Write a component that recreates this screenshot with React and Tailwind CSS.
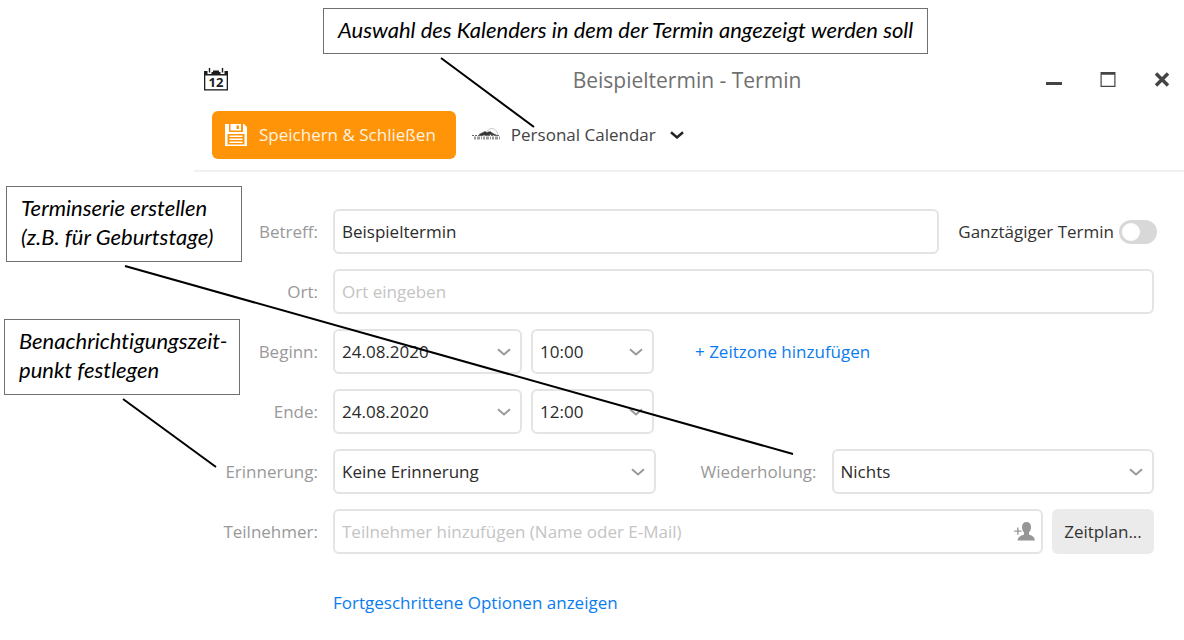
import { useState } from 'react';

const lines = [
  { x1: 441, y1: 58, x2: 534, y2: 127 },
  { x1: 125, y1: 266, x2: 793, y2: 454 },
  { x1: 123, y1: 399, x2: 216, y2: 467 },
];

function Chevron({ className }) {
  return (
    <svg
      className={`pointer-events-none absolute top-1/2 -translate-y-1/2 ${className}`}
      width="14"
      height="8"
      viewBox="0 0 14 8"
      fill="none"
      stroke="currentColor"
      aria-hidden="true"
    >
      <path d="M1 1.2 7 6.4l6-5.2" />
    </svg>
  );
}

function CalendarIcon() {
  return (
    <svg width="24" height="24" viewBox="0 0 24 24" aria-hidden="true">
      <path d="M0 3h3.500v3h4V4h9v2h4V3H24v19.500H0z" fill="#1c1c1c" />
      <path d="M4.800 0h1.400v4.500H4.800zM17.800 0h1.400v4.500h-1.400zM9 2.500h6V4H9z" fill="#1c1c1c" />
      <path d="M1.300 7.500h21.400v13.700H1.300z" fill="#fff" />
      <text x="12" y="19" textAnchor="middle" className="font-['Open_Sans',sans-serif] text-[13px] font-bold" fill="#1c1c1c">
        12
      </text>
    </svg>
  );
}

function SaveIcon() {
  return (
    <svg width="22" height="22" viewBox="0 0 22 22" fill="#fff" aria-hidden="true">
      <path fillRule="evenodd" d="M0 0h4v8h14V0h1l3 3v19H0zM2.500 10v10.500h17V10z" />
      <path fillRule="evenodd" d="M5.500 0H16v6.500H5.500zM11.500 1.500V5h2.500V1.500z" />
      <path d="M4.500 11.500h13V13h-13zM4.500 14.500h13V16h-13zM4.500 17.500h13V19h-13z" />
    </svg>
  );
}

function MountainIcon() {
  return (
    <svg width="29" height="16" viewBox="0 0 29 16" fill="none" aria-hidden="true">
      <path d="M15 4.500c2-4 9-5 11 3.500" stroke="#c9c9c9" />
      <path d="M7 7.500 10 6l3-1.500 2 1 3-1 3 2 4 2-4-.5-3-.5-3 1-3-.5-3 1z" fill="#333" stroke="#444" strokeWidth=".6" />
      <path d="M0 8.500h9M13 8.500h14" stroke="#666" strokeDasharray="2 1" />
      <path d="M2 11h26" stroke="#999" strokeWidth="3" strokeDasharray="2 1 3 1 1 1" />
    </svg>
  );
}

function AddPersonIcon() {
  return (
    <svg width="21" height="19" viewBox="0 0 21 19" fill="#969696" aria-hidden="true">
      <path d="M12.500 0c3 0 4.500 2 4.500 5 0 2.500-.8 4.300-2 5.600v1.900c2.500 1 5.500 2 6 6H3.500c.5-4 4-5 6.500-6v-1.900C8.800 9.300 8 7.500 8 5c0-3 1.500-5 4.500-5z" />
      <path d="M3.200 5.500h1.300v3h3v1.300h-3v3H3.200v-3h-3V8.500h3z" />
    </svg>
  );
}

function Label({ htmlFor, children }) {
  return (
    <label htmlFor={htmlFor} className="w-[124px] shrink-0 text-right text-[#999]">
      {children}
    </label>
  );
}

function Select({ id, label, value, className }) {
  return (
    <div className={`relative ${className}`}>
      <select
        id={id}
        aria-label={label}
        className="h-[45px] w-full appearance-none rounded-md border-2 border-[#e4e4e4] bg-white px-[7px] text-[#2b2b2b]"
      >
        <option>{value}</option>
      </select>
      <Chevron className="right-[11px] stroke-2 text-[#999]" />
    </div>
  );
}

function Callout({ className, children }) {
  return (
    <p
      className={`absolute border border-[#707070] bg-white px-3.5 py-1.5 font-[Lato,sans-serif] text-[22px] leading-[29px] whitespace-nowrap text-black italic [font-variant-ligatures:none] ${className}`}
    >
      {children}
    </p>
  );
}

function App() {
  const [subject, setSubject] = useState('Beispieltermin');
  const [location, setLocation] = useState('');
  const [attendees, setAttendees] = useState('');
  const [allDay, setAllDay] = useState(false);

  const inputClass =
    'h-[45px] w-full min-w-0 flex-1 rounded-md border-2 border-[#e4e4e4] bg-white px-[7px] text-[#2b2b2b] placeholder:text-[#c4c4c4]';

  return (
    <div className="relative min-h-screen bg-white pt-14 pl-[194px] font-['Open_Sans',sans-serif] text-[17px] leading-6">
      <header className="border-b-2 border-[#f0f0f0]">
        <div className="grid h-12 grid-cols-[1fr_auto_1fr] items-center pr-3.5 pl-2.5">
          <CalendarIcon />
          <h1 className="text-[21px] text-[#707070]">Beispieltermin - Termin</h1>
          <div className="flex items-center justify-end gap-[38px] text-[#444]">
            <button type="button" aria-label="Minimieren">
              <svg width="16" height="16" viewBox="0 0 16 16" fill="currentColor">
                <path d="M0 10h16v3H0z" />
              </svg>
            </button>
            <button type="button" aria-label="Maximieren">
              <svg width="16" height="16" viewBox="0 0 16 16" fill="currentColor">
                <path fillRule="evenodd" d="M.5 0h15v15H.500zM1.700 2.800v11h12.600v-11z" />
              </svg>
            </button>
            <button type="button" aria-label="Schließen">
              <svg width="16" height="16" viewBox="0 0 16 16" fill="none" stroke="currentColor" strokeWidth="3.500">
                <path d="m2 1.500 12 12M14 1.500l-12 12" />
              </svg>
            </button>
          </div>
        </div>

        <div className="flex items-center gap-4 pt-[7px] pb-[11px] pl-[18px]">
          <button
            type="button"
            className="flex h-12 items-center gap-3 rounded-md bg-[#ff9408] pr-5 pl-[13px] text-[#fff3e0]"
          >
            <SaveIcon />
            Speichern & Schließen
          </button>
          <div className="flex items-center gap-2.5">
            <MountainIcon />
            <div className="relative">
              <select aria-label="Kalender" className="appearance-none bg-white pr-7 text-[#444]">
                <option>Personal Calendar</option>
              </select>
              <Chevron className="right-0 stroke-[2.5] text-[#222]" />
            </div>
          </div>
        </div>
      </header>

      <form className="space-y-[15px] pt-[37px] pr-[30px] pb-6">
        <div className="flex items-center gap-[15px]">
          <Label htmlFor="subject">Betreff:</Label>
          <input id="subject" className={inputClass} value={subject} onChange={(e) => setSubject(e.target.value)} />
          <div className="-mr-[3px] ml-1 flex items-center gap-[5px]">
            <label htmlFor="allday" className="text-[#333]">
              Ganztägiger Termin
            </label>
            <input
              id="allday"
              type="checkbox"
              role="switch"
              checked={allDay}
              onChange={(e) => setAllDay(e.target.checked)}
              className="flex h-6 w-[38px] appearance-none rounded-full bg-[#d8d8d8] p-[3px] before:size-[18px] before:rounded-full before:bg-white checked:justify-end checked:bg-[#ff9408]"
            />
          </div>
        </div>

        <div className="flex items-center gap-[15px]">
          <Label htmlFor="location">Ort:</Label>
          <input
            id="location"
            className={inputClass}
            placeholder="Ort eingeben"
            value={location}
            onChange={(e) => setLocation(e.target.value)}
          />
        </div>

        <div className="flex items-center gap-[15px]">
          <Label htmlFor="start">Beginn:</Label>
          <div className="flex items-center gap-[9px]">
            <Select id="start" value="24.08.2020" className="w-[189px]" />
            <Select id="start-time" label="Beginn Uhrzeit" value="10:00" className="w-[123px]" />
          </div>
          <a href="#" className="ml-[26px] text-[#0a7cf0]">
            + Zeitzone hinzufügen
          </a>
        </div>

        <div className="flex items-center gap-[15px]">
          <Label htmlFor="end">Ende:</Label>
          <div className="flex items-center gap-[9px]">
            <Select id="end" value="24.08.2020" className="w-[189px]" />
            <Select id="end-time" label="Ende Uhrzeit" value="12:00" className="w-[123px]" />
          </div>
        </div>

        <div className="flex items-center gap-[15px]">
          <Label htmlFor="reminder">Erinnerung:</Label>
          <Select id="reminder" value="Keine Erinnerung" className="flex-1" />
          <label htmlFor="repeat" className="w-[146px] text-right text-[#999]">
            Wiederholung:
          </label>
          <Select id="repeat" value="Nichts" className="flex-1" />
        </div>

        <div className="flex items-center gap-[15px]">
          <Label htmlFor="attendees">Teilnehmer:</Label>
          <div className="flex flex-1 gap-[9px]">
            <div className="relative flex flex-1">
              <input
                id="attendees"
                className={inputClass}
                placeholder="Teilnehmer hinzufügen (Name oder E-Mail)"
                value={attendees}
                onChange={(e) => setAttendees(e.target.value)}
              />
              <button type="button" aria-label="Teilnehmer hinzufügen" className="absolute top-[13px] right-2">
                <AddPersonIcon />
              </button>
            </div>
            <button type="button" className="h-[45px] w-[102px] rounded-md bg-[#ebebeb] text-[#333]">
              Zeitplan...
            </button>
          </div>
        </div>

        <a href="#" className="ml-[139px] inline-block pt-[22px] text-[#0a7cf0]">
          Fortgeschrittene Optionen anzeigen
        </a>
      </form>

      <Callout className="top-2 left-[323px] h-[46px] w-[605px]">
        Auswahl des Kalenders in dem der Termin angezeigt werden soll
      </Callout>
      <Callout className="top-[186px] left-1.5 h-[76px] w-[236px]">
        Terminserie erstellen
        <br />
        (z.B. für Geburtstage)
      </Callout>
      <Callout className="top-[319px] left-1 h-[76px] w-[236px]">
        Benachrichtigungszeit-
        <br />
        punkt festlegen
      </Callout>

      <svg className="pointer-events-none absolute top-0 left-0" width="800" height="480" aria-hidden="true">
        {lines.map((line) => (
          <line key={line.x1} {...line} stroke="#000" strokeWidth="2" />
        ))}
      </svg>
    </div>
  );
}

export default App;
